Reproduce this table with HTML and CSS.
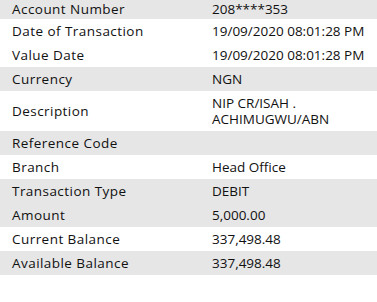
FILE: index.html
```html
<!DOCTYPE html>
<html>
<head>
<meta charset="utf-8">
<link rel="stylesheet" href="styles.css">
</head>
<body>
<div class="details">
  <div class="row shade first"><div class="label">Account Number</div><div class="value">208****353</div></div>
  <div class="row"><div class="label">Date of Transaction</div><div class="value">19/09/2020 08:01:28 PM</div></div>
  <div class="row"><div class="label">Value Date</div><div class="value">19/09/2020 08:01:28 PM</div></div>
  <div class="row shade"><div class="label">Currency</div><div class="value">NGN</div></div>
  <div class="row tall"><div class="label">Description</div><div class="value">NIP CR/ISAH . ACHIMUGWU/ABN</div></div>
  <div class="row shade"><div class="label">Reference Code</div><div class="value"></div></div>
  <div class="row"><div class="label">Branch</div><div class="value">Head Office</div></div>
  <div class="row shade"><div class="label">Transaction Type</div><div class="value">DEBIT</div></div>
  <div class="row shade"><div class="label">Amount</div><div class="value">5,000.00</div></div>
  <div class="row"><div class="label">Current Balance</div><div class="value">337,498.48</div></div>
  <div class="row shade"><div class="label">Available Balance</div><div class="value">337,498.48</div></div>
</div>
</body>
</html>
```
FILE: styles.css
```css
html, body {
  margin: 0;
  padding: 0;
  background: #ffffff;
}
body {
  font-family: "Open Sans", "Noto Sans", sans-serif;
  font-size: 13.5px;
  color: #111111;
}
.row {
  display: grid;
  grid-template-columns: 200px 1fr;
  align-items: center;
  min-height: 24px;
  box-sizing: border-box;
  padding: 4px 8px 4px 12px;
  line-height: 16px;
}
.row.first {
  min-height: 19px;
  padding-top: 1px;
  padding-bottom: 2px;
}
.row.tall {
  min-height: 39px;
}
.shade {
  background: #e6e6e6;
}
.label {
  letter-spacing: 0.45px;
}
.value {
  min-height: 16px;
}
```
